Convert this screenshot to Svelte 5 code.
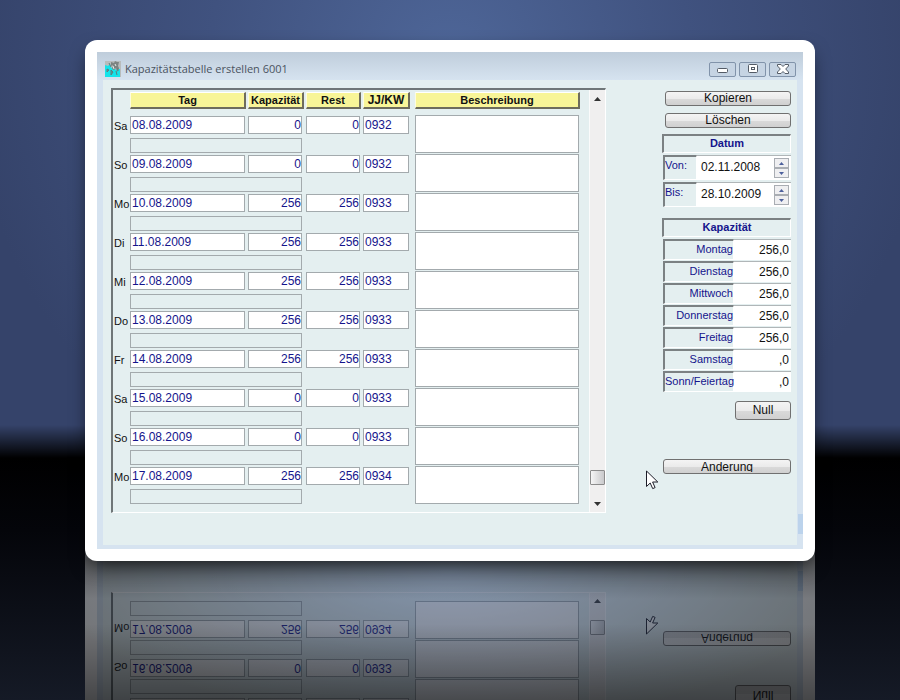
<script lang="ts">
    let days = $state([
        { day: "Sa", date: "08.08.2009", capacity: "0", rest: "0", week: "0932", note: "", text: "" },
        { day: "So", date: "09.08.2009", capacity: "0", rest: "0", week: "0932", note: "", text: "" },
        { day: "Mo", date: "10.08.2009", capacity: "256", rest: "256", week: "0933", note: "", text: "" },
        { day: "Di", date: "11.08.2009", capacity: "256", rest: "256", week: "0933", note: "", text: "" },
        { day: "Mi", date: "12.08.2009", capacity: "256", rest: "256", week: "0933", note: "", text: "" },
        { day: "Do", date: "13.08.2009", capacity: "256", rest: "256", week: "0933", note: "", text: "" },
        { day: "Fr", date: "14.08.2009", capacity: "256", rest: "256", week: "0933", note: "", text: "" },
        { day: "Sa", date: "15.08.2009", capacity: "0", rest: "0", week: "0933", note: "", text: "" },
        { day: "So", date: "16.08.2009", capacity: "0", rest: "0", week: "0933", note: "", text: "" },
        { day: "Mo", date: "17.08.2009", capacity: "256", rest: "256", week: "0934", note: "", text: "" },
    ]);

    let range = $state([
        { label: "Von:", value: "02.11.2008" },
        { label: "Bis:", value: "28.10.2009" },
    ]);

    let defaults = $state([
        { label: "Montag", value: "256,0" },
        { label: "Dienstag", value: "256,0" },
        { label: "Mittwoch", value: "256,0" },
        { label: "Donnerstag", value: "256,0" },
        { label: "Freitag", value: "256,0" },
        { label: "Samstag", value: ",0" },
        { label: "Sonn/Feiertag", value: ",0" },
    ]);

    function shiftDate(i: number, step: number) {
        const [d, m, y] = range[i].value.split(".").map(Number);
        const next = new Date(y, m - 1, d + step);
        const pad = (n: number) => String(n).padStart(2, "0");
        range[i].value = `${pad(next.getDate())}.${pad(next.getMonth() + 1)}.${next.getFullYear()}`;
    }

    function clearDefaults() {
        for (const entry of defaults) entry.value = ",0";
    }
</script>

<!-- drawn twice: once as the window, once as its reflection -->
{#snippet appWindow(id: string)}
    <div class="card">
        <div class="frame">
            <header class="titlebar">
                <svg class="app-icon" width="16" height="16" viewBox="0 0 16 16" aria-hidden="true">
                    <rect width="16" height="16" fill="#b9bcbc" />
                    <path d="M0 4l3 1 2-2 1 4 3-1 2 3 4-1v8H0z" fill="#14e4ea" />
                    <path d="M6 1l3 1 1-2 2 1 2 0-1 4 1 2-2 4-1-4-2 2-2-1 1-4-2 1z" fill="#7d8482" />
                    <path d="M2 8l2 1-2 2zM6 9l2 2-2 3zM11 10l1 4M4 2l2 4M13 7v3" fill="#4aa6a8" stroke="#5d7d7e" />
                    <path d="M10 3l1 2M8 5l1 3" stroke="#e8e8e8" />
                </svg>
                <h1>Kapazitätstabelle erstellen 6001</h1>
                <div class="window-buttons">
                    <button aria-label="Minimieren">
                        <svg width="14" height="12" viewBox="0 0 14 12">
                            <rect x="1.5" y="5.5" width="10" height="4" rx="1" fill="#fff" stroke="#535b66" />
                        </svg>
                    </button>
                    <button aria-label="Maximieren">
                        <svg width="14" height="12" viewBox="0 0 14 12">
                            <rect x="2.5" y="1.500" width="9" height="8" rx="1" fill="#fff" stroke="#535b66" />
                            <rect x="5.5" y="4.500" width="3" height="2" fill="#fff" stroke="#535b66" />
                        </svg>
                    </button>
                    <button aria-label="Schließen">
                        <svg width="14" height="12" viewBox="0 0 14 12">
                            <path
                                d="M1.500 1.500H5l2 2 2-2h3.500v1.500L9.700 6l2.800 3v1.500H9l-2-2-2 2H1.500V9l2.800-3-2.800-3z"
                                fill="#fff"
                                stroke="#535b66"
                                stroke-linejoin="round"
                            />
                        </svg>
                    </button>
                </div>
            </header>

            <main class="content">
                <section class="sheet">
                    <table>
                        <colgroup>
                            <col class="col-day" />
                            <col class="col-date" />
                            <col class="col-capacity" />
                            <col class="col-rest" />
                            <col class="col-week" />
                            <col />
                        </colgroup>
                        <thead>
                            <tr>
                                <td></td>
                                <th scope="col"><div>Tag</div></th>
                                <th scope="col"><div>Kapazität</div></th>
                                <th scope="col"><div>Rest</div></th>
                                <th scope="col" class="th-week"><div>JJ/KW</div></th>
                                <th scope="col"><div>Beschreibung</div></th>
                            </tr>
                        </thead>
                        <tbody>
                            {#each days as row}
                                <tr class="row-main">
                                    <th scope="row" class="day">{row.day}</th>
                                    <td class="cell-date"><input bind:value={row.date} aria-label="Tag" /></td>
                                    <td class="cell-capacity"><input class="num" bind:value={row.capacity} aria-label="Kapazität" /></td>
                                    <td class="cell-rest"><input class="num" bind:value={row.rest} aria-label="Rest" /></td>
                                    <td class="cell-week"><input bind:value={row.week} aria-label="JJ/KW" /></td>
                                    <td class="cell-text" rowspan="2">
                                        <textarea bind:value={row.text} aria-label="Beschreibung"></textarea>
                                    </td>
                                </tr>
                                <tr class="row-note">
                                    <td></td>
                                    <td class="cell-capacity" colspan="2">
                                        <input class="note" bind:value={row.note} aria-label="Bezeichnung" />
                                    </td>
                                    <td colspan="2"></td>
                                </tr>
                            {/each}
                        </tbody>
                    </table>
                    <div class="scrollbar">
                        <button aria-label="Nach oben">
                            <svg width="7" height="4" viewBox="0 0 7 4"><path d="M0 4l3.500-4 3.500 4z" fill="#333" /></svg>
                        </button>
                        <div class="track"><div class="thumb"></div></div>
                        <button aria-label="Nach unten">
                            <svg width="7" height="4" viewBox="0 0 7 4"><path d="M0 0l3.500 4 3.500-4z" fill="#333" /></svg>
                        </button>
                    </div>
                </section>

                <aside class="side">
                    <div class="actions">
                        <button class="btn">Kopieren</button>
                        <button class="btn">Löschen</button>
                    </div>

                    <h2>Datum</h2>
                    <div class="range">
                        {#each range as entry, i}
                            <div class="range-row">
                                <label for="{id}-range-{i}">{entry.label}</label>
                                <div class="date-box">
                                    <input id="{id}-range-{i}" bind:value={entry.value} />
                                    <div class="spinner">
                                        <button aria-label="Tag vor" onclick={() => shiftDate(i, 1)}>
                                            <svg width="5" height="3" viewBox="0 0 5 3"><path d="M0 3l2.500-3 2.500 3z" fill="#4c5f9c" /></svg>
                                        </button>
                                        <button aria-label="Tag zurück" onclick={() => shiftDate(i, -1)}>
                                            <svg width="5" height="3" viewBox="0 0 5 3"><path d="M0 0l2.500 3 2.500-3z" fill="#4c5f9c" /></svg>
                                        </button>
                                    </div>
                                </div>
                            </div>
                        {/each}
                    </div>

                    <h2>Kapazität</h2>
                    <div class="defaults">
                        {#each defaults as entry, i}
                            <div class="default-row">
                                <label for="{id}-default-{i}">{entry.label}</label>
                                <input id="{id}-default-{i}" bind:value={entry.value} />
                            </div>
                        {/each}
                    </div>

                    <button class="btn btn-null" onclick={clearDefaults}>Null</button>
                    <button class="btn btn-change"><span>Änderung</span></button>
                </aside>

                <svg class="pointer" width="13" height="20" viewBox="0 0 13 20" aria-hidden="true">
                    <path
                        d="M.5 1v15.500l3.700-3.500 2.500 5.600 2.400-1-2.500-5.600h5.200z"
                        fill="#fff"
                        stroke="#1c1c28"
                    />
                </svg>
            </main>
        </div>
    </div>
{/snippet}

<div class="stage">
    <div class="front">
        {@render appWindow("main")}
    </div>
    <div class="reflection" aria-hidden="true" inert>
        <div class="flipped">
            {@render appWindow("mirror")}
        </div>
    </div>
</div>

<style>
    :global(body) {
        margin: 0;
        background: #000;
    }

    .stage {
        box-sizing: border-box;
        min-height: 100vh;
        padding: 40px 85px 0;
        font-family: "Liberation Sans", Arial, sans-serif;
        font-size: 12px;
        color: #111;
        background:
            linear-gradient(transparent 425px, #000 458px, #04050a 530px, #151a26 700px),
            radial-gradient(ellipse 480px 480px at 50% 60px, #4e6698, #40527f 50%, #35436a 100%);
    }

    .front {
        position: relative;
        z-index: 1;
        border-radius: 12px;
        box-shadow: 0 8px 20px -6px rgba(0, 0, 0, 0.8);
    }

    .reflection {
        position: relative;
        height: 151px;
        margin-top: -12px;
        overflow: hidden;
        background: radial-gradient(ellipse 55% 100% at 50% 15%, #3c527a, #0a0d12);
    }

    .reflection::after {
        content: "";
        position: absolute;
        inset: 0;
        background: linear-gradient(rgba(0, 0, 0, 0.3) 12px, transparent 50px, transparent 75px, rgba(0, 0, 0, 0.4));
    }

    .flipped {
        margin-top: -5px;
        opacity: 0.43;
        transform: scaleY(-1);
    }

    .card {
        padding: 12px;
        border-radius: 12px;
        background: #fff;
    }

    .frame {
        padding: 0 6px 4px;
        background:
            linear-gradient(#bcd3ec, #bcd3ec) no-repeat right bottom 15px / 5px 20px,
            linear-gradient(#bfcddb, #d6e3f0 28px);
    }

    .titlebar {
        display: flex;
        align-items: center;
        gap: 4px;
        height: 28px;
        padding: 6px 1px 0 2px;
        box-sizing: border-box;
    }

    .app-icon {
        display: block;
    }

    h1 {
        flex: 1;
        margin: 0;
        font: 400 11px/16px "Open Sans", sans-serif;
        color: #4a5360;
    }

    .window-buttons {
        display: flex;
        gap: 3px;
    }

    .window-buttons button {
        display: grid;
        place-items: center;
        width: 27px;
        height: 15px;
        padding: 0;
        border: 1px solid #8193aa;
        border-radius: 2px;
        background: #c6d4e3;
    }

    .content {
        position: relative;
        display: flex;
        gap: 56px;
        padding: 8px 6px 32px 8px;
        background: #e4eff0;
    }

    .sheet {
        flex: 1;
        display: flex;
        border: 1px solid #fff;
        border-top: 2px solid #6f7678;
        border-left: 2px solid #6f7678;
    }

    table {
        flex: 1;
        align-self: flex-start;
        margin-bottom: 7px;
        table-layout: fixed;
        border-collapse: collapse;
    }

    td,
    th {
        padding: 0;
        vertical-align: top;
    }

    .col-day {
        width: 17px;
    }

    .col-date {
        width: 118px;
    }

    .col-capacity {
        width: 58px;
    }

    .col-rest {
        width: 57px;
    }

    .col-week {
        width: 52px;
    }

    thead th {
        padding: 2px 2px 6px 0;
        font-size: 11px;
    }

    thead .th-week {
        padding-right: 5px;
        font-size: 12px;
    }

    thead th:last-child {
        padding-right: 10px;
    }

    thead div {
        box-sizing: border-box;
        height: 17px;
        line-height: 15px;
        border: solid;
        border-width: 1px 2px 2px 1px;
        border-color: #fff #6e6c5c #6e6c5c #fdfce0;
        background: #f8f598;
    }

    tbody input,
    textarea {
        display: block;
        box-sizing: border-box;
        width: 100%;
        height: 18px;
        padding: 0 1px;
        border: 1px solid #a3aaad;
        border-radius: 0;
        background: #fff;
        font: inherit;
        color: #14148c;
    }

    textarea {
        height: 38px;
        resize: none;
    }

    tbody .num {
        padding: 0;
        text-align: right;
    }

    tbody .note {
        height: 15px;
        background: transparent;
    }

    .row-main {
        height: 23px;
    }

    .row-main td {
        padding-top: 1px;
    }

    .row-main .cell-text {
        padding: 0 11px 0 0;
    }

    .row-note {
        height: 16px;
    }

    .day {
        padding: 3px 0 0 1px;
        font-size: 11px;
        font-weight: 400;
        line-height: 16px;
        text-align: left;
    }

    .cell-date,
    .cell-rest {
        padding-right: 3px;
    }

    .cell-capacity {
        padding-right: 4px;
    }

    .cell-week {
        padding-right: 6px;
    }

    .scrollbar {
        display: flex;
        flex-direction: column;
        width: 15px;
        background: #f0efef;
        box-shadow: -1px 0 #fbfbfb;
    }

    .scrollbar button {
        display: grid;
        place-items: center;
        height: 17px;
        padding: 0;
        border: 0;
        background: none;
    }

    .track {
        flex: 1;
        display: flex;
        align-items: flex-end;
        padding-bottom: 10px;
    }

    .thumb {
        box-sizing: border-box;
        width: 100%;
        height: 15px;
        border: 1px solid #8c8c8c;
        border-radius: 1px;
        background: linear-gradient(90deg, #f6f6f6, #c9c9cb);
    }

    .side {
        display: flex;
        flex-direction: column;
        width: 129px;
    }

    .actions {
        display: flex;
        flex-direction: column;
        gap: 7px;
        padding: 3px 0 6px 3px;
    }

    .btn {
        display: flex;
        align-items: center;
        justify-content: center;
        box-sizing: border-box;
        height: 15px;
        padding: 0;
        border: 1px solid #707070;
        border-radius: 3px;
        background: linear-gradient(#f4f4f4, #ebebeb 50%, #dadada 51%, #d0d0d0);
        font: inherit;
        line-height: 13px;
        color: #111;
    }

    .btn-null {
        align-self: flex-end;
        width: 56px;
        height: 19px;
        margin: 9px 0 39px;
    }

    .btn-change {
        margin-left: 1px;
    }

    /* the flat button cuts its caption off above and below */
    .btn-change span {
        height: 10px;
        line-height: 10px;
        overflow: hidden;
    }

    h2,
    label {
        box-sizing: border-box;
        border: 1px solid #fff;
        border-top: 2px solid #7b8183;
        border-left: 2px solid #7b8183;
        font-size: 11px;
        color: #14148c;
    }

    h2 {
        height: 19px;
        margin: 0;
        line-height: 14px;
        text-align: center;
    }

    .range {
        display: grid;
        gap: 2px;
        padding: 2px 0 11px 1px;
    }

    .range-row {
        display: flex;
        height: 25px;
    }

    .range-row label {
        flex: none;
        width: 34px;
        line-height: 16px;
    }

    .date-box {
        flex: 1;
        min-width: 0;
        display: flex;
        align-items: flex-start;
        box-sizing: border-box;
        padding: 2px 2px 0 4px;
        border-top: 1px solid #b0b6b8;
        background: #fff;
    }

    .side input {
        width: 0;
        min-width: 0;
        padding: 0;
        border: 0;
        background: #fff;
        font: inherit;
        color: #111;
    }

    .date-box input {
        flex: 1;
        height: 18px;
    }

    .spinner {
        display: grid;
        width: 15px;
    }

    .spinner button {
        display: grid;
        place-items: center;
        height: 10px;
        padding: 0;
        border: 1px solid #a9adb3;
        background: #efeff1;
    }

    .defaults {
        display: grid;
        gap: 1px;
        padding: 2px 0 0 1px;
    }

    .default-row {
        display: flex;
        height: 21px;
    }

    .default-row label {
        box-sizing: border-box;
        flex: none;
        width: 71px;
        line-height: 16px;
        text-align: right;
    }

    .side .default-row input {
        flex: 1;
        padding-right: 2px;
        border-top: 1px solid #b0b6b8;
        text-align: right;
    }

    .pointer {
        position: absolute;
        right: 138px;
        bottom: 55px;
    }
</style>
